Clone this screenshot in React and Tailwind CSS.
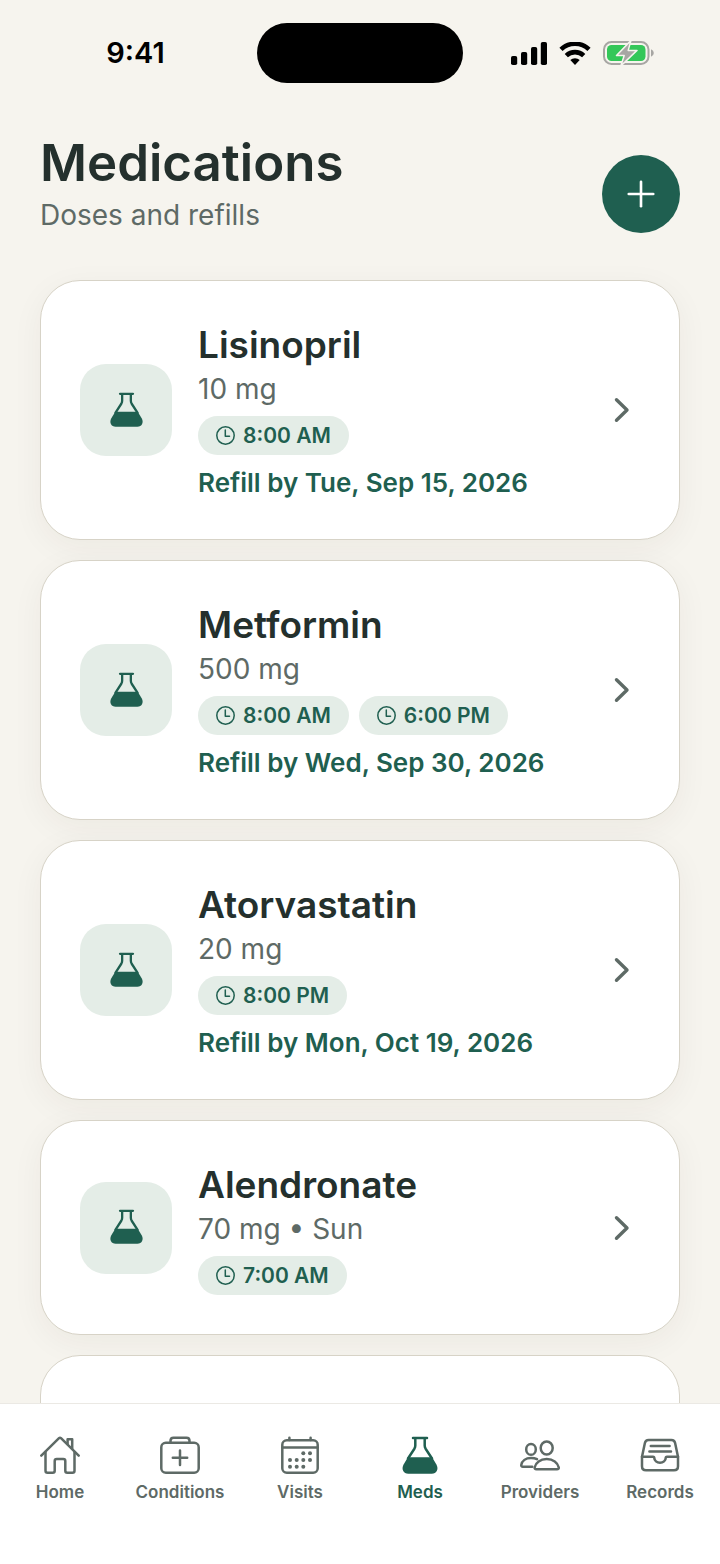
import { Plus } from 'lucide-react';

const medications = [
  { name: 'Lisinopril', dose: '10 mg', times: ['8:00 AM'], refill: 'Refill by Tue, Sep 15, 2026' },
  { name: 'Metformin', dose: '500 mg', times: ['8:00 AM', '6:00 PM'], refill: 'Refill by Wed, Sep 30, 2026' },
  { name: 'Atorvastatin', dose: '20 mg', times: ['8:00 PM'], refill: 'Refill by Mon, Oct 19, 2026' },
  { name: 'Alendronate', dose: '70 mg • Sun', times: ['7:00 AM'] },
];

const tabs = [
  { label: 'Home', icon: HomeIcon },
  { label: 'Conditions', icon: KitIcon },
  { label: 'Visits', icon: CalendarIcon },
  { label: 'Meds', icon: FlaskIcon, active: true },
  { label: 'Providers', icon: PeopleIcon },
  { label: 'Records', icon: TrayIcon },
];

function Icon({ className = 'size-10', children }) {
  return (
    <svg
      viewBox="0 0 40 40"
      className={className}
      fill="none"
      stroke="currentColor"
      strokeWidth="2.5"
      strokeLinecap="round"
      strokeLinejoin="round"
      aria-hidden="true"
    >
      {children}
    </svg>
  );
}

function HomeIcon() {
  return (
    <Icon>
      <path d="M1.3 19.6 19 2.200q1-.9 2 0l17.700 17.400" />
      <path d="M5.500 16v18.700q0 2 2 2h5.200q2 0 2-2V25q0-2 2-2h6.600q2 0 2 2v9.700q0 2 2 2h5.200q2 0 2-2V16" />
      <path d="M27.600 8V3.200h4.600v9.400" />
    </Icon>
  );
}

function KitIcon() {
  return (
    <Icon>
      <rect x="1.300" y="6.800" width="37.400" height="30" rx="4.500" />
      <path d="M10.500 6.600V4.700q0-3 3-3h13q3 0 3 3v1.900M20 14.500v14.500M12.800 21.800h14.400" />
    </Icon>
  );
}

function CalendarIcon() {
  return (
    <Icon>
      <rect x="2.300" y="4.300" width="35.400" height="32.500" rx="4.500" />
      <path d="M2.300 11.400h35.400M9.400 4V1.700M30.600 4V1.700" />
      <g fill="currentColor" stroke="none">
        <circle cx="23.300" cy="17.300" r="2" />
        <circle cx="30" cy="17.300" r="2" />
        <circle cx="10" cy="24" r="2" />
        <circle cx="16.700" cy="24" r="2" />
        <circle cx="23.300" cy="24" r="2" />
        <circle cx="30" cy="24" r="2" />
        <circle cx="10" cy="30.700" r="2" />
        <circle cx="16.700" cy="30.700" r="2" />
        <circle cx="23.300" cy="30.700" r="2" />
      </g>
    </Icon>
  );
}

function FlaskIcon({ className }) {
  return (
    <Icon className={className}>
      <path d="M13 2h14M15.300 2v7.500q0 1.700-.9 3.200L8 22.500M24.700 2v7.500q0 1.700.9 3.200L32 22.500" />
      <path
        d="M7.900 21.300h24.200l4.300 7.200c2.500 4.500.3 9.200-4.700 9.200H8.300c-5 0-7.200-4.700-4.700-9.200z"
        fill="currentColor"
        stroke="none"
      />
    </Icon>
  );
}

function PeopleIcon() {
  return (
    <Icon>
      <ellipse cx="26.700" cy="12" rx="6" ry="6.500" />
      <ellipse cx="11" cy="13.400" rx="4.800" ry="5.400" />
      <path d="M26.700 23c6.500 0 11 3.700 12 8.200.3 1.300-.4 2.100-1.700 2.100H16.400c-1.300 0-2-.8-1.700-2.100 1-4.500 5.500-8.200 12-8.200z" />
      <path d="M17 23.200C15.400 22.400 13.400 22 11 22 5.600 22 2 25 1.300 28.900c-.2 1.100.4 1.800 1.500 1.800h9.400" />
    </Icon>
  );
}

function TrayIcon() {
  return (
    <Icon>
      <path d="M8.600 4h22.800c2 0 3.300 1 3.700 2.900L38 20.700v9.600q0 4-4 4H6q-4 0-4-4v-9.600L4.900 6.900C5.300 5 6.600 4 8.600 4z" />
      <path d="M2 20.700h11q1.300 0 1.300 1.300a5.700 4.800 0 0 0 11.400 0q0-1.300 1.300-1.300h11M10.800 10h18.800M9.400 15.400h21.600" />
    </Icon>
  );
}

function ClockIcon() {
  return (
    <svg viewBox="0 0 19 19" className="size-[19px]" fill="none" stroke="currentColor" strokeLinecap="round" strokeLinejoin="round" aria-hidden="true">
      <circle cx="9.500" cy="9.500" r="8.700" strokeWidth="1.500" />
      <path d="M9.300 4v6.300h4.200" strokeWidth="1.500" />
    </svg>
  );
}

function Chevron() {
  return (
    <svg
      viewBox="0 0 36 36"
      className="size-9 shrink-0 text-[#5e6a66]"
      fill="none"
      stroke="currentColor"
      strokeWidth="3.400"
      strokeLinecap="round"
      strokeLinejoin="round"
      aria-hidden="true"
    >
      <path d="m12.500 7.800 10.500 10.200-10.500 10.200" />
    </svg>
  );
}

function StatusBar() {
  return (
    <div className="grid grid-cols-[1fr_206px_1fr] items-center pt-[23px] text-black">
      <span className="pl-3.5 text-center text-[29px] leading-9 font-semibold">9:41</span>
      <div className="h-[60px] rounded-full bg-black" />
      <div className="flex items-center justify-center gap-3 pr-[18px]">
        <svg viewBox="0 0 36 23" className="h-[23px] w-9" fill="currentColor" aria-hidden="true">
          <rect x="0" y="14" width="6.200" height="9" rx="1.800" />
          <rect x="10" y="10" width="6.200" height="13" rx="1.800" />
          <rect x="20" y="5" width="6.200" height="18" rx="1.800" />
          <rect x="29.800" y="0" width="6.200" height="23" rx="1.800" />
        </svg>
        <svg viewBox="0 0 32 23" className="h-[23px] w-8" fill="none" stroke="currentColor" aria-hidden="true">
          <path d="M2 7.400a20.300 20.300 0 0 1 28 0" strokeWidth="4.600" />
          <path d="M7.300 13.600a12.500 12.500 0 0 1 17.400 0" strokeWidth="4.600" />
          <path d="M16 23l-4.700-4.900a6.600 6.600 0 0 1 9.400 0z" fill="currentColor" stroke="none" />
        </svg>
        <svg viewBox="0 0 51 26" className="h-[26px] w-[51px]" aria-hidden="true">
          <rect x="1" y="2" width="44.500" height="22" rx="7.500" fill="none" stroke="#a7a6a3" strokeWidth="2" />
          <path d="M48 9.200q2.800 1.200 2.800 3.800T48 16.800z" fill="#a7a6a3" />
          <rect x="4" y="5" width="38.500" height="16" rx="4.500" fill="#34c759" />
          <path
            d="M28 .4 13.500 15.400h7.700L17.800 26 34 10.400h-8.800z"
            fill="#a7a6a3"
            stroke="#f6f4ee"
            strokeWidth="1.500"
            strokeLinejoin="round"
          />
        </svg>
      </div>
    </div>
  );
}

function MedicationCard({ name, dose, times, refill }) {
  return (
    <a
      href="#"
      className="flex items-center gap-[26px] rounded-[40px] border border-[#d7d3c7] bg-white p-[39px] shadow-[0_8px_32px_rgba(50,45,20,0.05)]"
    >
      <div className="flex size-[92px] shrink-0 items-center justify-center rounded-[26px] bg-[#e4ede7] text-[#1f5f50]">
        <FlaskIcon className="size-[37px]" />
      </div>
      <div className="min-w-0 flex-1">
        <h2 className="text-[37px] leading-[50px] font-semibold text-[#24302d]">{name}</h2>
        <p className="text-[28px] leading-[38px] text-[#5e6a66]">{dose}</p>
        <div className="mt-2 flex gap-2.5">
          {times.map((time) => (
            <span
              key={time}
              className="flex h-[39px] items-center gap-2 rounded-full bg-[#e4ede7] px-[18px] text-[21px] font-semibold text-[#1f5f50]"
            >
              <ClockIcon />
              {time}
            </span>
          ))}
        </div>
        {refill && <p className="mt-[11px] text-[26px] leading-[34px] font-semibold text-[#1f5f50]">{refill}</p>}
      </div>
      <Chevron />
    </a>
  );
}

export default function App() {
  return (
    <div className="flex h-screen flex-col bg-[#f6f4ee] font-['Inter',sans-serif]">
      <StatusBar />

      <main className="min-h-0 flex-1 overflow-hidden px-10 pt-[46px]">
        <header className="flex items-end justify-between">
          <div>
            <h1 className="text-[51px] leading-[68px] font-semibold text-[#24302d]">Medications</h1>
            <p className="text-[28px] leading-[36px] text-[#5e6a66]">Doses and refills</p>
          </div>
          <button
            type="button"
            aria-label="Add medication"
            className="flex size-[78px] items-center justify-center rounded-full bg-[#1f5f50] text-white"
          >
            <Plus className="size-[42px]" strokeWidth={1.5} />
          </button>
        </header>

        <div className="mt-[47px] flex flex-col gap-5">
          {medications.map((med) => (
            <MedicationCard key={med.name} {...med} />
          ))}
          {/* next card peeks out above the tab bar */}
          <div className="h-[215px] rounded-[40px] border border-[#d7d3c7] bg-white" />
        </div>
      </main>

      <nav className="relative grid h-[161px] shrink-0 grid-cols-6 border-t border-[#ebe9e4] bg-white pt-8">
        {tabs.map(({ label, icon: TabIcon, active }) => (
          <a
            key={label}
            href="#"
            aria-current={active ? 'page' : undefined}
            className={`flex flex-col items-center gap-1 text-[17px] leading-6 font-semibold ${active ? 'text-[#1f5f50]' : 'text-[#5e6a66]'}`}
          >
            <TabIcon />
            {label}
          </a>
        ))}
      </nav>
    </div>
  );
}
